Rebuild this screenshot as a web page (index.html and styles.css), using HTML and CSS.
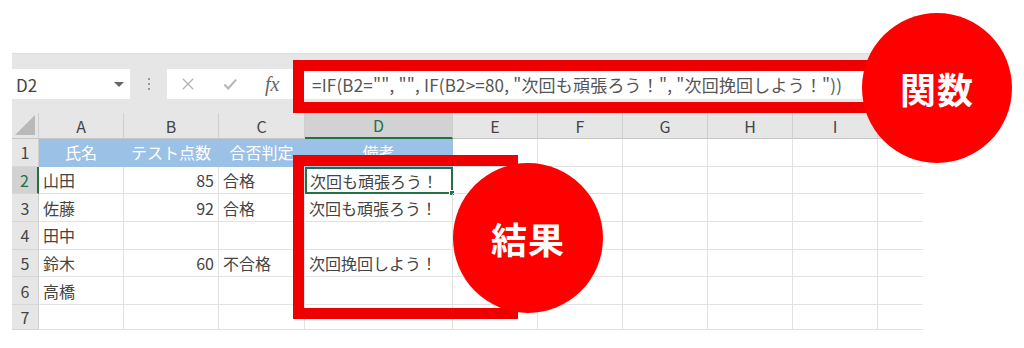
FILE: index.html
```html
<!DOCTYPE html>
<html lang="ja">
<head>
    <meta charset="UTF-8">
    <title>IF関数の例</title>
    <link rel="stylesheet" href="styles.css">
</head>
<body>
    <div class="stage">
        <div class="excel">
            <div class="toolbar">
                <div class="name-box">
                    <span>D2</span>
                    <span class="caret"></span>
                </div>
                <div class="grip">
                    <i></i><i></i><i></i>
                </div>
                <div class="formula-box">
                    <div class="fbtns">
                        <svg class="ficon" viewBox="0 0 16 16" fill="none" stroke="#b5b5b5" stroke-width="1.6">
                            <path d="M2 2l12 12M14 2L2 14"></path>
                        </svg>
                        <svg class="ficon" viewBox="0 0 16 16" fill="none" stroke="#b5b5b5" stroke-width="2.4">
                            <path d="M1.5 8.5l4.5 4.5L15 3"></path>
                        </svg>
                        <span class="fx">fx</span>
                    </div>
                    <div class="formula">=IF(B2="", "", IF(B2&gt;=80, "次回も頑張ろう！", "次回挽回しよう！"))</div>
                </div>
            </div>

            <div class="sheet">
                <div class="corner"><span class="tri"></span></div>
                <div class="col-h">A</div>
                <div class="col-h">B</div>
                <div class="col-h">C</div>
                <div class="col-h active">D</div>
                <div class="col-h">E</div>
                <div class="col-h">F</div>
                <div class="col-h">G</div>
                <div class="col-h">H</div>
                <div class="col-h">I</div>
                <div class="col-h"></div>

                <div class="row-h">1</div>
                <div class="cell head">氏名</div>
                <div class="cell head">テスト点数</div>
                <div class="cell head">合否判定</div>
                <div class="cell head">備考</div>
                <div class="cell"></div><div class="cell"></div><div class="cell"></div><div class="cell"></div><div class="cell"></div><div class="cell last"></div>

                <div class="row-h active">2</div>
                <div class="cell">山田</div>
                <div class="cell num">85</div>
                <div class="cell">合格</div>
                <div class="cell selected">次回も頑張ろう！<span class="handle"></span></div>
                <div class="cell"></div><div class="cell"></div><div class="cell"></div><div class="cell"></div><div class="cell"></div><div class="cell last"></div>

                <div class="row-h">3</div>
                <div class="cell">佐藤</div>
                <div class="cell num">92</div>
                <div class="cell">合格</div>
                <div class="cell">次回も頑張ろう！</div>
                <div class="cell"></div><div class="cell"></div><div class="cell"></div><div class="cell"></div><div class="cell"></div><div class="cell last"></div>

                <div class="row-h">4</div>
                <div class="cell">田中</div>
                <div class="cell num"></div>
                <div class="cell"></div>
                <div class="cell"></div>
                <div class="cell"></div><div class="cell"></div><div class="cell"></div><div class="cell"></div><div class="cell"></div><div class="cell last"></div>

                <div class="row-h">5</div>
                <div class="cell">鈴木</div>
                <div class="cell num">60</div>
                <div class="cell">不合格</div>
                <div class="cell">次回挽回しよう！</div>
                <div class="cell"></div><div class="cell"></div><div class="cell"></div><div class="cell"></div><div class="cell"></div><div class="cell last"></div>

                <div class="row-h">6</div>
                <div class="cell">高橋</div>
                <div class="cell num"></div>
                <div class="cell"></div>
                <div class="cell"></div>
                <div class="cell"></div><div class="cell"></div><div class="cell"></div><div class="cell"></div><div class="cell"></div><div class="cell last"></div>

                <div class="row-h">7</div>
                <div class="cell"></div>
                <div class="cell"></div>
                <div class="cell"></div>
                <div class="cell"></div>
                <div class="cell"></div><div class="cell"></div><div class="cell"></div><div class="cell"></div><div class="cell"></div><div class="cell last"></div>
            </div>
        </div>

        <!-- callouts -->
        <div class="mark mark-formula"></div>
        <div class="mark mark-result"></div>
        <div class="badge badge-formula">関数</div>
        <div class="badge badge-result">結果</div>
    </div>
</body>
</html>
```

FILE: styles.css
```css
* {
    margin: 0;
    padding: 0;
    box-sizing: border-box;
}

html, body {
    height: 100%;
    overflow: hidden;
}

body {
    background-color: #ffffff;
    font-family: "Noto Sans CJK JP", "Noto Sans", sans-serif;
    color: #444;
}

.stage {
    position: relative;
    width: 1024px;
    height: 348px;
    padding: 53px 0 0 12px;
}

.excel {
    width: 911px;
}

/* formula bar */
.toolbar {
    height: 60px;
    background-color: #e6e6e6;
    border-top: 1px solid #dcdcdc;
    display: flex;
    align-items: flex-start;
    padding-top: 15px;
}

.name-box {
    width: 118px;
    height: 30px;
    background-color: #fff;
    display: flex;
    align-items: center;
    justify-content: space-between;
    padding: 0 6px 0 4px;
    font-size: 17px;
    color: #444;
}

.caret {
    width: 0;
    height: 0;
    border-left: 5px solid transparent;
    border-right: 5px solid transparent;
    border-top: 5px solid #666;
}

.grip {
    width: 37px;
    height: 30px;
    display: flex;
    flex-direction: column;
    align-items: center;
    justify-content: center;
    gap: 3px;
}

.grip i {
    width: 2px;
    height: 2px;
    background-color: #999;
}

.formula-box {
    flex: 1;
    height: 30px;
    background-color: #fff;
    display: flex;
    align-items: center;
}

.fbtns {
    width: 126px;
    display: flex;
    align-items: center;
    gap: 28px;
    padding-left: 14px;
}

.ficon {
    width: 14px;
    height: 14px;
}

.fx {
    font-family: "Liberation Serif", serif;
    font-style: italic;
    font-size: 20px;
    color: #666;
    line-height: 1;
}

.formula {
    font-size: 17px;
    letter-spacing: 0.2px;
    color: #555;
    white-space: nowrap;
    padding-left: 19px;
}

/* grid */
.sheet {
    display: grid;
    grid-template-columns: 27px 85px 95px 86px 148px 85px 85px 85px 85px 85px 45px;
    grid-template-rows: 26px repeat(6, 27.7px) 25px;
    font-size: 16px;
}

.corner {
    background-color: #e6e6e6;
    border-right: 1px solid #cfcfcf;
    border-bottom: 1px solid #c6c6c6;
    position: relative;
}

.tri {
    position: absolute;
    right: 3px;
    bottom: 3px;
    width: 0;
    height: 0;
    border-left: 20px solid transparent;
    border-bottom: 20px solid #b9b9b9;
}

.col-h {
    background-color: #e6e6e6;
    border-right: 1px solid #cfcfcf;
    border-bottom: 1px solid #c6c6c6;
    display: flex;
    align-items: center;
    justify-content: center;
    color: #444;
}

.col-h.active {
    background-color: #d2d2d2;
    color: #217346;
    border-bottom: 2px solid #217346;
}

.row-h {
    background-color: #e6e6e6;
    border-right: 1px solid #cfcfcf;
    border-bottom: 1px solid #d6d6d6;
    display: flex;
    align-items: center;
    justify-content: center;
    color: #444;
}

.row-h.active {
    background-color: #d2d2d2;
    color: #217346;
    border-right: 2px solid #217346;
}

.cell {
    border-right: 1px solid #e2e2e2;
    border-bottom: 1px solid #e2e2e2;
    display: flex;
    align-items: center;
    padding: 0 4px;
    white-space: nowrap;
    color: #444;
    position: relative;
}

.cell.last {
    border-right: none;
}

.cell.num {
    justify-content: flex-end;
}

.cell.head {
    background-color: #9bc2e6;
    color: #fff;
    justify-content: center;
    border-right-color: #9bc2e6;
    border-bottom-color: #9bc2e6;
}

.cell.selected {
    border: 2px solid #217346;
    padding-left: 3px;
}

.handle {
    position: absolute;
    right: -4px;
    bottom: -4px;
    width: 6px;
    height: 6px;
    background-color: #217346;
    border: 1px solid #fff;
}

/* red callouts */
.mark {
    position: absolute;
    border: 11px solid #ee0000;
}

.mark-formula {
    left: 293px;
    top: 60px;
    width: 590px;
    height: 53px;
}

.mark-result {
    left: 293px;
    top: 155px;
    width: 225px;
    height: 164px;
}

.badge {
    position: absolute;
    width: 150px;
    height: 150px;
    border-radius: 50%;
    background-color: #ff0000;
    color: #fff;
    font-size: 36px;
    font-weight: bold;
    display: flex;
    align-items: center;
    justify-content: center;
    letter-spacing: 1px;
}

.badge-formula {
    left: 862px;
    top: 13px;
}

.badge-result {
    left: 453px;
    top: 163px;
}
```
